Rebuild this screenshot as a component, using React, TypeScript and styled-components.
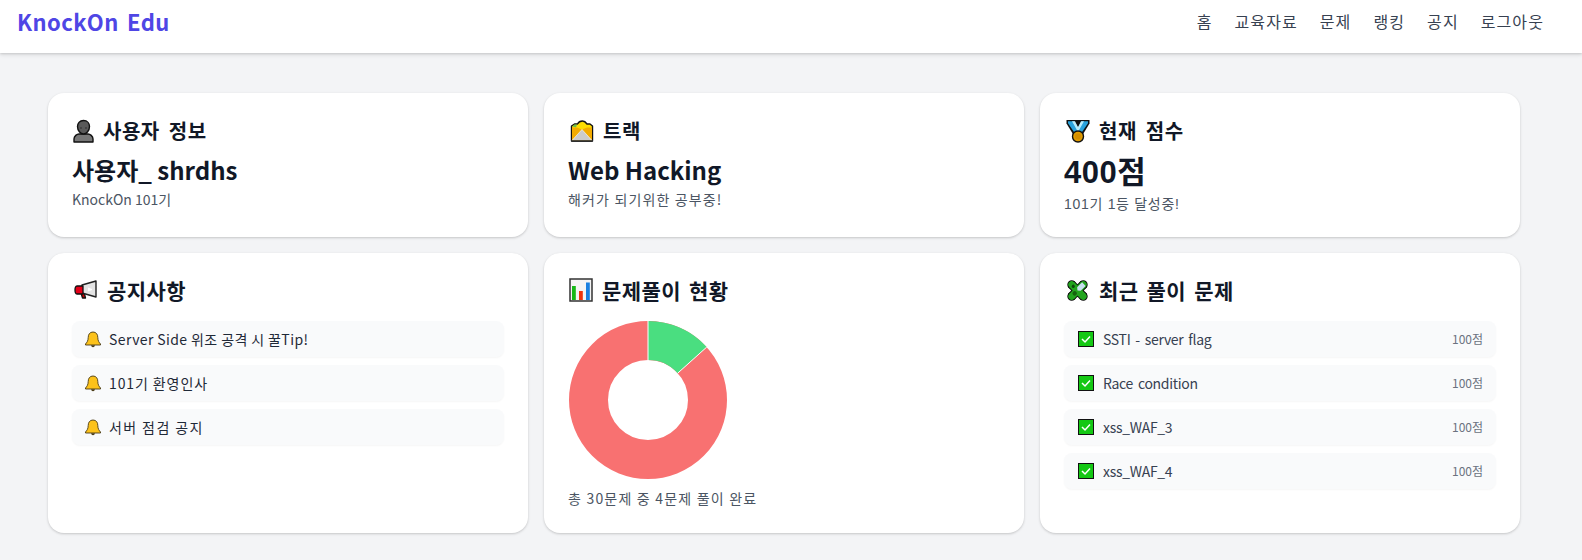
import React from "react";
import styled, { createGlobalStyle } from "styled-components";

const Global = createGlobalStyle`
  html, body { margin: 0; padding: 0; background: #f3f4f6; }
  body { font-family: "Noto Sans CJK KR", "Noto Sans", sans-serif; color: #111827; }
  * { box-sizing: border-box; }
`;

const Page = styled.div`
  width: 1582px;
  height: 560px;
  overflow: hidden;
  background: #f3f4f6;
`;
const Nav = styled.nav`
  height: 53px;
  background: #fff;
  box-shadow: 0 2px 4px rgba(0, 0, 0, 0.1), 0 1px 2px rgba(0, 0, 0, 0.1);
  display: flex;
  justify-content: space-between;
  align-items: flex-start;
  padding: 3px 38px 0 17px;
`;
const Logo = styled.div`
  font-size: 22px;
  line-height: 36px;
  font-weight: 700;
  color: #4f46e5;
  letter-spacing: 0.4px;
  word-spacing: 3px;
`;
const NavLinks = styled.div`
  display: flex;
  gap: 22px;
  padding-top: 4px;
`;
const NavLink = styled.a`
  font-size: 16px;
  line-height: 28px;
  letter-spacing: 1.1px;
  color: #374151;
`;
const Main = styled.main`
  padding: 40px 0 0 48px;
  display: grid;
  grid-template-columns: repeat(3, 480px);
  grid-template-rows: 144px 280px;
  gap: 16px;
`;
const Card = styled.section`
  background: #fff;
  border-radius: 16px;
  padding: 24px;
  box-shadow: 0 1px 3px rgba(0, 0, 0, 0.14), 0 1px 2px rgba(0, 0, 0, 0.06);
`;
const Title = styled.h2<{ $big?: boolean }>`
  margin: ${(p) => (p.$big ? "0 0 18px" : "1px 0 0")};
  display: flex;
  align-items: center;
  gap: 8px;
  font-size: ${(p) => (p.$big ? "21px" : "20px")};
  line-height: 26px;
  letter-spacing: ${(p) => (p.$big ? "0.4px" : "0.5px")};
  word-spacing: ${(p) => (p.$big ? "3px" : "4px")};
  font-weight: 600;
  color: #111827;
`;
const IconSlot = styled.span<{ $w: number }>`
  flex: none;
  width: ${(p) => p.$w}px;
  display: flex;
  justify-content: center;
`;
const Value = styled.div`
  font-size: 24px;
  line-height: 32px;
  margin-top: 10px;
  font-weight: 700;
  color: #111827;
`;
const Score = styled.div`
  font-family: "Liberation Sans", "Noto Sans CJK KR", sans-serif;
  font-size: 31px;
  line-height: 36px;
  letter-spacing: 0.5px;
  margin-top: 11px;
  font-weight: 700;
  color: #111827;
`;
const Sub = styled.p<{ $track?: number }>`
  margin: 3px 0 0;
  font-size: 14px;
  line-height: 20px;
  letter-spacing: ${(p) => p.$track ?? 0}px;
  color: #4b5563;
`;
const ScoreSub = styled(Sub)`
  font-family: "Liberation Sans", "Noto Sans CJK KR", sans-serif;
  margin-top: 3px;
`;
const List = styled.ul`
  list-style: none;
  margin: 0;
  padding: 0;
  display: flex;
  flex-direction: column;
  gap: 8px;
`;
const Row = styled.li<{ $track?: number }>`
  height: 36px;
  display: flex;
  align-items: center;
  gap: 8px;
  padding: 0 13px;
  background: #f9fafb;
  border-radius: 8px;
  box-shadow: 0 1px 2px rgba(0, 0, 0, 0.04);
  font-size: 14px;
  letter-spacing: ${(p) => p.$track ?? 0}px;
  color: #1f2937;
`;
const RowName = styled.span`
  flex: 1;
  color: #374151;
  letter-spacing: -0.3px;
  word-spacing: 2px;
`;
const Points = styled.span`
  font-size: 12px;
  color: #6b7280;
  margin-top: -1px;
`;
const CheckBox = styled.svg`
  flex: none;
  margin: 0 1px;
`;
const Chart = styled.svg`
  display: block;
  margin: 2px 0 0 1px;
`;
const Caption = styled.p`
  margin: 9px 0 0;
  font-size: 14px;
  line-height: 20px;
  letter-spacing: 1.2px;
  color: #4b5563;
`;

const Person = () => (
  <svg width="21" height="24" viewBox="0 0 21 24">
    <path d="M1 23v-3c0-3 3-5 5-5h9c2 0 5 2 5 5v3z" fill="#777" stroke="#111" strokeWidth="1.4" strokeLinejoin="round" />
    <path d="M10.500 1.500c4 0 6 3 6 6 0 4-3 7.500-6 7.500s-6-3.500-6-7.500c0-3 2-6 6-6z" fill="#5a5a5a" stroke="#111" strokeWidth="1.4" />
    <path d="M8 8.500v1M13 8.500v1" stroke="#111" strokeWidth="1.2" />
  </svg>
);
const Folder = () => (
  <svg width="24" height="22" viewBox="0 0 24 22">
    <path d="M1.500 21V6l3-2h3c1-2 3-3 5-3s3.500 1.500 4.500 3h3l2.500 2v15z" fill="#fcdc00" stroke="#111" strokeWidth="1.4" strokeLinejoin="round" />
    <path d="M2.500 6.500l2-2h2.500l-1 3z" fill="#6cc04a" />
    <path d="M2 7.500h5l5 2 5-2h5V20.500H2z" fill="#f2ab00" />
    <path d="M2 20.500l10-11 10 11z" fill="#ccc" />
    <path d="M2 20.500l10-11 10 11" fill="none" stroke="#fff" strokeWidth=".6" />
    <path d="M1.500 21h21" stroke="#222" strokeWidth="1.400" />
  </svg>
);
const Medal = () => (
  <svg width="24" height="24" viewBox="0 0 24 24">
    <path d="M.5 1h23v3.500L16.500 16h-9L.5 4.500z" fill="#111" />
    <path d="M2 2.300h6.400L12 9l3.600-6.700H22v1.900L15 14.500H9L2 4.200z" fill="#2aa3dd" />
    <path d="M6 2.300h3L12 8l3-5.700h3L12 13z" fill="#b9ecfb" />
    <path d="M9.800 2.500h4.400L12 6.800z" fill="#111" />
    <circle cx="12" cy="17.500" r="5.500" fill="#e09b00" stroke="#111" strokeWidth="1.400" />
    <circle cx="12" cy="17.500" r="3" fill="#d48e00" />
  </svg>
);
const Megaphone = () => (
  <svg width="24" height="20" viewBox="0 0 24 20">
    <path d="M7 13l1.500 5h3L10 12z" fill="#c00" stroke="#111" strokeWidth="1.300" strokeLinejoin="round" />
    <path d="M8 5L22 1v16L8 13z" fill="#e4e4e4" stroke="#222" strokeWidth="1.400" strokeLinejoin="round" />
    <path d="M3 6h6v8H3C1.500 14 1 12 1 10s.5-4 2-4z" fill="#e50019" stroke="#111" strokeWidth="1.300" strokeLinejoin="round" />
    <path d="M14 7.500l4 1.500v1l-4 1.500z" fill="#fff" />
  </svg>
);
const Bars = () => (
  <svg width="24" height="24" viewBox="0 0 24 24">
    <rect x="1" y="1" width="22" height="22" fill="#f4f4f4" stroke="#333" strokeWidth="1.500" />
    <rect x="3" y="8" width="3.800" height="14" fill="#16b816" />
    <rect x="10" y="13" width="3.800" height="9" fill="#f0340c" />
    <rect x="17" y="4.500" width="3.800" height="17.500" fill="#1a80e0" />
  </svg>
);
const puzzleShape = (
  <>
    <rect x="8.500" y="4" width="7" height="16" />
    <rect x="4" y="8.500" width="16" height="7" />
    <circle cx="12" cy="3.800" r="3.400" />
    <circle cx="12" cy="20.200" r="3.400" />
    <circle cx="3.800" cy="12" r="3.400" />
    <circle cx="20.200" cy="12" r="3.400" />
  </>
);
const Puzzle = () => (
  <svg width="25" height="25" viewBox="-0.500 -0.500 25 25">
    <g transform="rotate(45 12 12)">
      <g fill="#0b0b0b" stroke="#0b0b0b" strokeWidth="2">{puzzleShape}</g>
      <g fill="#22a41e">{puzzleShape}</g>
      <path d="M9.500 3h5v7l-2.500 2-2.500-2z" fill="#c6dfee" />
      <circle cx="12" cy="16" r="2.200" fill="#14640f" />
      <circle cx="6" cy="12" r="1.600" fill="#0d4a0a" />
    </g>
  </svg>
);
const Bell = () => (
  <svg width="16" height="17" viewBox="0 0 16 17">
    <path d="M8 1c3.200 0 4.800 2.400 4.800 5.500 0 3.500 1.400 5 2.700 6.500v1H.5v-1C1.800 11.500 3.200 10 3.200 6.500 3.200 3.400 4.800 1 8 1z" fill="#fcc21b" stroke="#4a3b16" strokeWidth=".9" strokeLinejoin="round" />
    <path d="M6 14.300c.3 1.200 1 1.900 2 1.900s1.700-.7 2-1.900z" fill="#4a3b16" />
  </svg>
);
const Check = () => (
  <CheckBox width="16" height="16" viewBox="0 0 16 16">
    <rect x=".5" y=".5" width="15" height="15" fill="#14c814" stroke="#111" />
    <path d="M4 8l3 3 5-5.500" fill="none" stroke="#fff" strokeWidth="1.500" />
  </CheckBox>
);

const notices = [
  { text: "Server Side 위조 공격 시 꿀Tip!", track: 0.4 },
  { text: "101기 환영인사", track: 0.9 },
  { text: "서버 점검 공지", track: 1.4 },
];
const solved = ["SSTI - server flag", "Race condition", "xss_WAF_3", "xss_WAF_4"];

export default function App() {
  return (
    <Page>
      <Global />
      <Nav>
        <Logo>KnockOn Edu</Logo>
        <NavLinks>
          {["홈", "교육자료", "문제", "랭킹", "공지", "로그아웃"].map((t) => (
            <NavLink key={t}>{t}</NavLink>
          ))}
        </NavLinks>
      </Nav>
      <Main>
        <Card>
          <Title><IconSlot $w={23}><Person /></IconSlot>사용자 정보</Title>
          <Value>사용자_ shrdhs</Value>
          <Sub>KnockOn 101기</Sub>
        </Card>
        <Card>
          <Title><IconSlot $w={27}><Folder /></IconSlot>트랙</Title>
          <Value>Web Hacking</Value>
          <Sub $track={1.15}>해커가 되기위한 공부중!</Sub>
        </Card>
        <Card>
          <Title><IconSlot $w={27}><Medal /></IconSlot>현재 점수</Title>
          <Score>400점</Score>
          <ScoreSub $track={0.7}>101기 1등 달성중!</ScoreSub>
        </Card>
        <Card>
          <Title $big><IconSlot $w={27}><Megaphone /></IconSlot>공지사항</Title>
          <List>
            {notices.map((n) => (
              <Row key={n.text} $track={n.track}><Bell />{n.text}</Row>
            ))}
          </List>
        </Card>
        <Card>
          <Title $big><IconSlot $w={26}><Bars /></IconSlot>문제풀이 현황</Title>
          <Chart width="158" height="158" viewBox="-79 -79 158 158">
            <circle r="59.500" fill="none" stroke="#f87171" strokeWidth="39" />
            <path d="M0 -79A79 79 0 0 1 58.700 -52.900L29.700 -26.800A40 40 0 0 0 0 -40Z" fill="#4ade80" />
            <path d="M0 -79V-40M58.700 -52.900L29.700 -26.800" stroke="#fff" strokeWidth="1" />
          </Chart>
          <Caption>총 30문제 중 4문제 풀이 완료</Caption>
        </Card>
        <Card>
          <Title $big><IconSlot $w={27}><Puzzle /></IconSlot>최근 풀이 문제</Title>
          <List>
            {solved.map((s) => (
              <Row key={s}><Check /><RowName>{s}</RowName><Points>100점</Points></Row>
            ))}
          </List>
        </Card>
      </Main>
    </Page>
  );
}
